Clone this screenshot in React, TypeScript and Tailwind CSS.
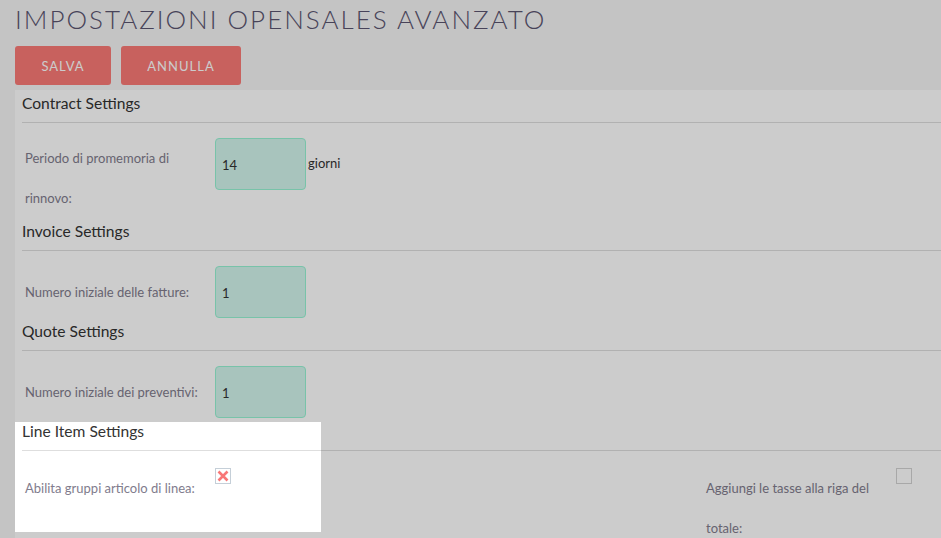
import type { ReactNode } from 'react';

const LABEL = "pl-[3px] pr-[12px] text-[13px] leading-[40px] text-[#817c8d]";

function Section({ title, children }: { title: string; children: ReactNode }) {
  return (
    <div>
      <h3 className="h-[26px] leading-[26px] text-[15.6px] text-[#333]">{title}</h3>
      <div className="mt-[6px] border-t border-[#dedede]" />
      {children}
    </div>
  );
}

function TextField({ value }: { value: string }) {
  return (
    <input
      readOnly
      defaultValue={value}
      className="w-[91px] h-[52px] rounded-[4px] border border-[#96f4d4] bg-[#d2f5ed] px-[6px] pt-[1px] text-[13px] text-[#333] outline-none"
    />
  );
}

function CheckBox({ checked }: { checked?: boolean }) {
  if (checked) {
    return (
      <div className="w-[16px] h-[16px] border border-[#c5cfd8] bg-white flex items-center justify-center">
        <svg width="12" height="12" viewBox="0 0 12 12">
          <path d="M1.5 1.5 L10.5 10.5 M10.5 1.5 L1.5 10.5" stroke="#f87777" strokeWidth="2.6" strokeLinecap="butt" />
        </svg>
      </div>
    );
  }
  return <div className="w-[16px] h-[16px] border border-[#d2d2d2] bg-white" />;
}

export default function App() {
  return (
    <div className="relative min-h-screen overflow-hidden bg-[#f5f5f5] font-['Lato','Open_Sans',sans-serif]">
      <div className="relative">
        <h1 className="pl-[15px] pt-[3px] text-[26px] leading-[32px] font-light tracking-[2px] uppercase text-[#5a5470]">
          Impostazioni OpenSales Avanzato
        </h1>

        <div className="mt-[11px] flex gap-[10px] pl-[15px]">
          <button className="w-[96px] h-[39px] pt-[2px] rounded-[3px] bg-[#fa7a76] text-white text-[13px] tracking-[1px] uppercase">
            Salva
          </button>
          <button className="w-[120px] h-[39px] pt-[2px] rounded-[3px] bg-[#fa7a76] text-white text-[13px] tracking-[1px] uppercase">
            Annulla
          </button>
        </div>

        <div className="ml-[15px] mt-[5px] bg-white pl-[7px] pb-[20px]">
          <Section title="Contract Settings">
            <div className="grid grid-cols-[193px_488px_193px_1fr] items-start pt-[15px]">
              <div className={LABEL}>Periodo di promemoria di rinnovo:</div>
              <div className="flex items-center gap-[2px]">
                <TextField value="14" />
                <span className="text-[13px] text-[#333]">giorni</span>
              </div>
            </div>
          </Section>

          <Section title="Invoice Settings">
            <div className="grid grid-cols-[193px_488px_193px_1fr] items-start pt-[15px]">
              <div className={`${LABEL} pt-[6px]`}>Numero iniziale delle fatture:</div>
              <div>
                <TextField value="1" />
              </div>
            </div>
          </Section>

          <Section title="Quote Settings">
            <div className="grid grid-cols-[193px_488px_193px_1fr] items-start pt-[15px]">
              <div className={`${LABEL} pt-[6px]`}>Numero iniziale dei preventivi:</div>
              <div>
                <TextField value="1" />
              </div>
            </div>
          </Section>

          <Section title="Line Item Settings">
            <div className="grid grid-cols-[193px_488px_193px_1fr] items-start pt-[17px]">
              <div className={LABEL}>Abilita gruppi articolo di linea:</div>
              <div>
                <CheckBox checked />
              </div>
              <div className={LABEL}>Aggiungi le tasse alla riga del totale:</div>
              <div>
                <CheckBox />
              </div>
            </div>
          </Section>
        </div>
      </div>

      {/* tour highlight: dims everything except the Line Item block */}
      <div className="pointer-events-none absolute left-[15px] top-[422px] w-[306px] h-[110px] shadow-[0_0_0_3000px_rgba(0,0,0,0.2)]" />
    </div>
  );
}
